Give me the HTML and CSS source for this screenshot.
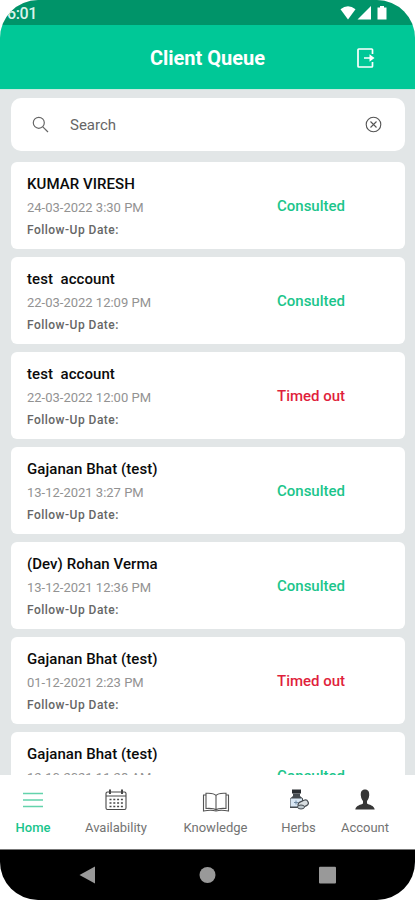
FILE: index.html
```html
<!DOCTYPE html>
<html lang="en">
<head>
<meta charset="utf-8">
<title>Client Queue</title>
<link rel="stylesheet" href="styles.css">
</head>
<body>
<div class="phone">
  <div class="status">
    <span class="time">6:01</span>
    <svg class="status-icons" width="48" height="16" viewBox="0 0 48 16" fill="#fff">
      <path d="M.5 4.2Q8 -1.8 15.5 4.2L8 14.5Z"/>
      <path d="M31 1V14.5H17.500Z"/>
      <path d="M37.500 2.500H40V1H44V2.500H46.500V14.500H37.500Z"/>
    </svg>
  </div>
  <header class="header">
    <h1>Client Queue</h1>
    <svg class="logout" width="20" height="22" viewBox="0 0 20 22" fill="none" stroke="#fff" stroke-width="1.700">
      <path d="M16.500 7V2.800Q16.500 2 15.700 2H2.800Q2 2 2 2.800V19.200Q2 20 2.800 20H15.700Q16.500 20 16.500 19.200V15M8 11H16"/>
      <path d="M13.500 7.200L18.500 11L13.500 14.800Z" fill="#fff" stroke="none"/>
    </svg>
  </header>
  <main class="content">
    <div class="search">
      <svg width="17" height="17" viewBox="0 0 17 17" fill="none" stroke="#666" stroke-width="1.200"><circle cx="6.800" cy="6.800" r="5.500"/><path d="M10.800 10.800L16 16"/></svg>
      <span class="placeholder">Search</span>
      <svg width="17" height="17" viewBox="0 0 17 17" fill="none" stroke="#555" stroke-width="1.100"><circle cx="8.500" cy="8.500" r="7.300"/><path d="M5.500 5.500L11.500 11.500M11.500 5.500L5.500 11.500"/></svg>
    </div>
    <article class="card"><div class="info"><h2>KUMAR VIRESH</h2><p class="date">24-03-2022 3:30 PM</p><p class="follow">Follow-Up Date:</p></div><span class="state">Consulted</span></article>
    <article class="card"><div class="info"><h2>test  account</h2><p class="date">22-03-2022 12:09 PM</p><p class="follow">Follow-Up Date:</p></div><span class="state">Consulted</span></article>
    <article class="card"><div class="info"><h2>test  account</h2><p class="date">22-03-2022 12:00 PM</p><p class="follow">Follow-Up Date:</p></div><span class="state timeout">Timed out</span></article>
    <article class="card"><div class="info"><h2>Gajanan Bhat (test)</h2><p class="date">13-12-2021 3:27 PM</p><p class="follow">Follow-Up Date:</p></div><span class="state">Consulted</span></article>
    <article class="card"><div class="info"><h2>(Dev) Rohan Verma</h2><p class="date">13-12-2021 12:36 PM</p><p class="follow">Follow-Up Date:</p></div><span class="state">Consulted</span></article>
    <article class="card"><div class="info"><h2>Gajanan Bhat (test)</h2><p class="date">01-12-2021 2:23 PM</p><p class="follow">Follow-Up Date:</p></div><span class="state timeout">Timed out</span></article>
    <article class="card"><div class="info"><h2>Gajanan Bhat (test)</h2><p class="date">12-10-2021 11:28 AM</p><p class="follow">Follow-Up Date:</p></div><span class="state">Consulted</span></article>
  </main>
  <nav class="nav">
    <a class="tab active">
      <svg width="20" height="24" viewBox="0 0 20 24" fill="none" stroke="#63d3ac" stroke-width="1.600"><path d="M0 5.500H20M0 12H20M0 18.500H20"/></svg>
      <span>Home</span>
    </a>
    <a class="tab">
      <svg width="22" height="24" viewBox="0 0 22 24" fill="none" stroke="#484848"><rect x="1" y="4" width="20" height="17.500" rx="1.500" stroke-width="1.100"/><path d="M1 8H21" stroke-width="1.200"/><path d="M5 1.500V6M17 1.500V6" stroke-width="2"/><path d="M4.500 11.500H18M4.500 15H18M4.500 18.500H18" stroke-width="1.500" stroke-dasharray="2 1.800"/></svg>
      <span>Availability</span>
    </a>
    <a class="tab">
      <svg width="28" height="24" viewBox="0 0 28 24" fill="none" stroke="#555" stroke-width="1.100"><path d="M14 7.500Q12 4.800 4 5.300V20.500Q12 20 14 22Q16 20 24 20.500V5.300Q16 4.800 14 7.500V22"/><path d="M4 7H1.500V23Q9 21.500 14 23Q19 21.500 26.500 23V7H24"/></svg>
      <span>Knowledge</span>
    </a>
    <a class="tab">
      <svg width="20" height="24" viewBox="0 0 20 24"><path d="M3 1.500H12V5.500H3Z" fill="#292d31"/><path d="M4 5.500H11V8L14 10.500V20H1V10.500L4 8Z" fill="#454b50"/><path d="M1.500 10.500H13V18.500H1.500Z" fill="#d9e7f4"/><path d="M7 12.500V16.500M5 14.500H9" stroke="#718ca6"/><rect x="9" y="13" width="10.500" height="6" rx="3" transform="rotate(-25 14 16)" fill="#d8dde0" stroke="#454b50" stroke-width="1.200"/><ellipse cx="12" cy="19" rx="3.500" ry="2" fill="#bdc7ce" stroke="#454b50"/></svg>
      <span>Herbs</span>
    </a>
    <a class="tab">
      <svg width="20" height="24" viewBox="0 0 20 24" fill="#363636"><path d="M10 1.500C6.800 1.500 5.500 3.700 5.800 7.500C6 10 7 12 8 13V15.500C6 17 1 17 .3 21.500H19.700C19 17 14 17 12 15.500V13C13 12 14 10 14.200 7.500C14.500 3.700 13.200 1.500 10 1.500Z"/></svg>
      <span>Account</span>
    </a>
  </nav>
  <div class="system">
    <svg width="17" height="18" viewBox="0 0 17 18"><path d="M16 .5V17.500L.5 9Z" fill="#999"/></svg>
    <svg width="17" height="18" viewBox="0 0 17 18"><circle cx="8.500" cy="9" r="8" fill="#999"/></svg>
    <svg width="17" height="18" viewBox="0 0 17 18"><rect y=".7" width="17" height="16.800" rx="1" fill="#999"/></svg>
  </div>
</div>
</body>
</html>
```
FILE: styles.css
```css
* { box-sizing: border-box; }
body { margin: 0; background: #fff; font-family: Roboto, sans-serif; }
h1, h2, p { margin: 0; }
svg { display: block; flex: none; }
.phone { width: 415px; height: 900px; border-radius: 38px; overflow: hidden; display: flex; flex-direction: column; background: #e2e6e7; }
.status { height: 25px; flex: none; background: #009469; display: flex; justify-content: space-between; align-items: flex-start; padding: 5px 25px 0 7px; }
.time { color: #d9f3e9; font-size: 16px; line-height: 18px; letter-spacing: -.4px; font-weight: 500; }
.status-icons { margin-right: 2px; }
.header { height: 64px; flex: none; background: #00c897; display: grid; grid-template-columns: 1fr auto 1fr; align-items: center; padding-top: 2px; }
.header h1 { grid-column: 2; color: #fff; font-size: 20px; line-height: 24px; font-weight: 700; }
.logout { margin-left: 91px; }
.content { flex: 1; min-height: 0; overflow: hidden; padding: 8px 10px 0 11px; border-top: 1px solid #c9e9df; }
.search { height: 53px; margin-bottom: 11px; background: #fff; border-radius: 10px; display: flex; align-items: center; padding: 0 23px 0 21px; }
.placeholder { flex: 1; margin-left: 21px; color: #666; font-size: 15px; }
.card { height: 87px; margin-bottom: 8px; padding: 12px 16px; background: #fff; border-radius: 6px; display: grid; grid-template-columns: 250px 1fr; }
.card h2 { font-size: 15px; line-height: 20px; font-weight: 500; letter-spacing: .06px; color: #0b0b0b; white-space: pre; }
.date { margin-top: 5px; font-size: 13px; line-height: 18px; color: #929292; }
.follow { margin-top: 4px; font-size: 12px; line-height: 18px; font-weight: 500; letter-spacing: .48px; color: #666; }
.state { padding-top: 22px; font-size: 15px; line-height: 20px; font-weight: 500; color: #1bc58b; }
.timeout { color: #df1f3c; }
.nav { height: 75px; flex: none; background: #fff; display: grid; grid-template-columns: 66px 100px 99px 67px 66px; padding-top: 13px; border-bottom: 1px solid #777; }
.tab { display: flex; flex-direction: column; align-items: center; gap: 7px; font-size: 13px; line-height: 18px; color: #737373; }
.active { color: #18c58c; font-weight: 500; }
.system { height: 50px; flex: none; background: #000; display: flex; justify-content: center; gap: 103px; padding-top: 16px; }
```
